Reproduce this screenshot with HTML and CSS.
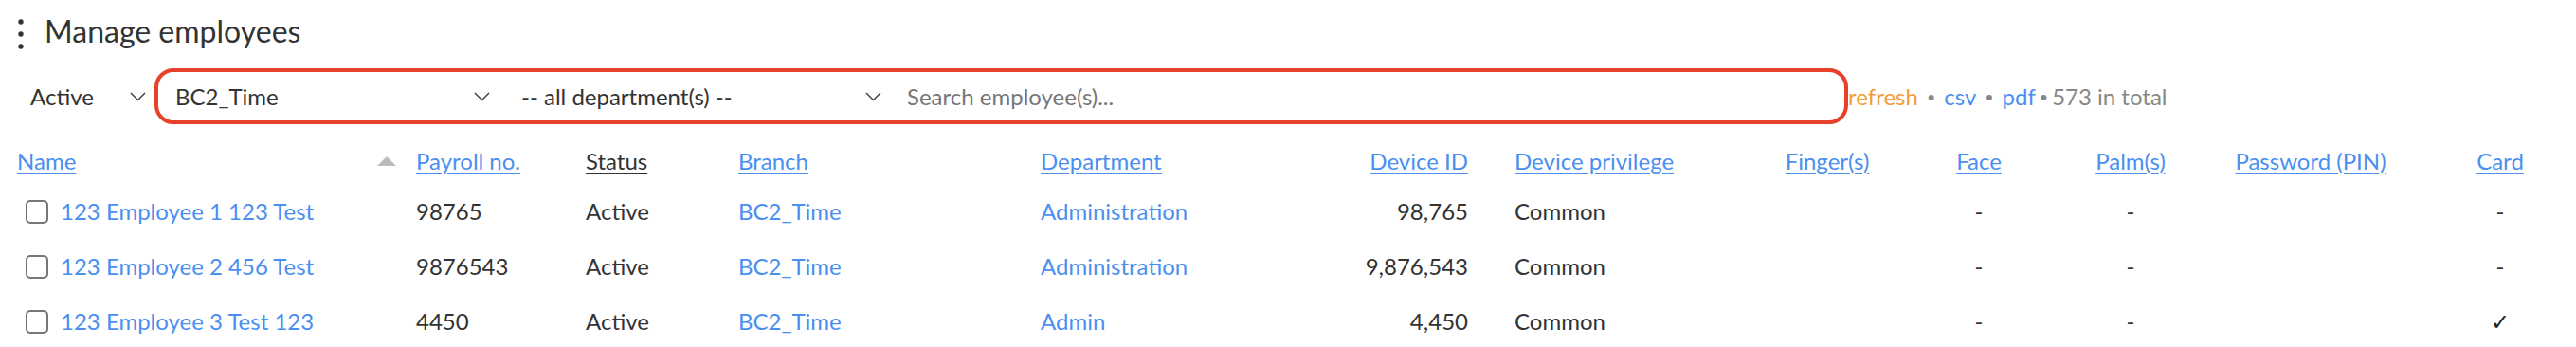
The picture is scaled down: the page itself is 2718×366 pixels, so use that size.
FILE: index.html
```html
<!DOCTYPE html>
<html lang="en">
<head>
    <meta charset="UTF-8">
    <meta name="viewport" content="width=device-width, initial-scale=1.0">
    <title>Manage employees</title>
    <link rel="stylesheet" href="styles.css">
</head>
<body>

    <div class="title-bar">
        <svg class="kebab" width="10" height="34" viewBox="0 0 10 34">
            <circle cx="5" cy="4" r="2.7"/>
            <circle cx="5" cy="17" r="2.7"/>
            <circle cx="5" cy="30" r="2.7"/>
        </svg>
        <h1>Manage employees</h1>
    </div>

    <div class="filter-bar">
        <div class="select status-select">
            <span>Active</span>
            <svg class="chevron" width="17" height="10" viewBox="0 0 17 10"><polyline points="1,1 8.5,8.5 16,1"/></svg>
        </div>
        <div class="filter-box">
            <div class="select branch-select">
                <span>BC2_Time</span>
                <svg class="chevron" width="17" height="10" viewBox="0 0 17 10"><polyline points="1,1 8.5,8.5 16,1"/></svg>
            </div>
            <div class="select dept-select">
                <span>-- all department(s) --</span>
                <svg class="chevron" width="17" height="10" viewBox="0 0 17 10"><polyline points="1,1 8.5,8.5 16,1"/></svg>
            </div>
            <input type="text" class="search-input" placeholder="Search employee(s)...">
        </div>
        <div class="summary">
            <a href="#" class="refresh">refresh</a>
            <span class="bullet">&bull;</span>
            <a href="#">csv</a>
            <span class="bullet">&bull;</span>
            <a href="#">pdf</a>
            <span class="bullet last">&bull;</span>
            <span class="total">573 in total</span>
        </div>
    </div>

    <table class="employees">
        <colgroup>
            <col style="width: 422px">
            <col style="width: 179px">
            <col style="width: 161px">
            <col style="width: 319px">
            <col style="width: 282px">
            <col style="width: 218px">
            <col style="width: 250px">
            <col style="width: 160px">
            <col style="width: 160px">
            <col style="width: 160px">
            <col style="width: 220px">
            <col style="width: 170px">
        </colgroup>
        <thead>
            <tr>
                <th>
                    <div class="name-head">
                        <a href="#">Name</a>
                        <svg class="sort" width="20" height="10" viewBox="0 0 20 10"><polygon points="10,0 20,10 0,10"/></svg>
                    </div>
                </th>
                <th><a href="#">Payroll no.</a></th>
                <th><span class="plain-head">Status</span></th>
                <th><a href="#">Branch</a></th>
                <th><a href="#">Department</a></th>
                <th class="num"><a href="#">Device ID</a></th>
                <th><a href="#">Device privilege</a></th>
                <th class="mid"><a href="#">Finger(s)</a></th>
                <th class="mid"><a href="#">Face</a></th>
                <th class="mid"><a href="#">Palm(s)</a></th>
                <th class="mid"><a href="#">Password (PIN)</a></th>
                <th class="mid card"><a href="#">Card</a></th>
            </tr>
        </thead>
        <tbody id="employeeRows"></tbody>
    </table>

    <script>
        const employees = [
            { name: "123 Employee 1 123 Test", payroll: "98765", status: "Active", branch: "BC2_Time", department: "Administration", deviceId: 98765, privilege: "Common", card: false },
            { name: "123 Employee 2 456 Test", payroll: "9876543", status: "Active", branch: "BC2_Time", department: "Administration", deviceId: 9876543, privilege: "Common", card: false },
            { name: "123 Employee 3 Test 123", payroll: "4450", status: "Active", branch: "BC2_Time", department: "Admin", deviceId: 4450, privilege: "Common", card: true }
        ];

        const rows = document.getElementById('employeeRows');

        employees.forEach(emp => {
            const tr = document.createElement('tr');
            tr.innerHTML =
                '<td><div class="name-cell"><input type="checkbox" class="pick"><a href="#">' + emp.name + '</a></div></td>' +
                '<td>' + emp.payroll + '</td>' +
                '<td>' + emp.status + '</td>' +
                '<td><a href="#">' + emp.branch + '</a></td>' +
                '<td><a href="#">' + emp.department + '</a></td>' +
                '<td class="num">' + emp.deviceId.toLocaleString('en-US') + '</td>' +
                '<td>' + emp.privilege + '</td>' +
                '<td class="mid"></td>' +
                '<td class="mid">-</td>' +
                '<td class="mid">-</td>' +
                '<td class="mid"></td>' +
                '<td class="mid card">' + (emp.card ? '<span class="tick">&#10003;</span>' : '-') + '</td>';
            rows.appendChild(tr);
        });
    </script>
</body>
</html>
```

FILE: styles.css
```css
* {
    margin: 0;
    padding: 0;
    box-sizing: border-box;
}

body {
    font-family: Lato, "Open Sans", sans-serif;
    font-size: 24px;
    color: #333;
    background-color: #fff;
    padding-left: 17px;
}

a {
    color: #4a8ff0;
    text-decoration: none;
}

.title-bar {
    display: flex;
    align-items: flex-start;
    gap: 20px;
    padding-top: 14px;
}

.kebab {
    margin-top: 5px;
    fill: #333;
}

h1 {
    font-size: 32px;
    font-weight: 400;
    line-height: 38px;
    color: #333;
}

.filter-bar {
    display: flex;
    align-items: center;
    margin-top: 19px;
    height: 59px;
}

.select {
    display: flex;
    align-items: center;
    justify-content: space-between;
    height: 100%;
    color: #333;
}

.chevron {
    fill: none;
    stroke: #444;
    stroke-width: 1.5;
}

.status-select {
    width: 146px;
    padding: 0 9px 0 15px;
}

.filter-box {
    display: flex;
    align-items: center;
    width: 1787px;
    height: 59px;
    border: 4px solid #e8402a;
    border-radius: 20px;
}

.branch-select {
    width: 365px;
    padding: 0 15px 0 18px;
}

.dept-select {
    width: 408px;
    padding: 0 10px 0 18px;
}

.search-input {
    flex: 1;
    height: 100%;
    border: none;
    outline: none;
    background: transparent;
    font-family: inherit;
    font-size: 24px;
    color: #333;
    padding-left: 17px;
}

.search-input::placeholder {
    color: #777;
}

.summary {
    display: flex;
    align-items: center;
    color: #888;
    white-space: nowrap;
}

.summary .refresh {
    color: #f29d38;
}

.bullet {
    font-size: 16px;
    color: #888;
    margin: 0 9px;
}

.bullet.last {
    margin: 0 4px;
}

.employees {
    margin-top: 14px;
    table-layout: fixed;
    border-collapse: collapse;
    width: 2701px;
}

.employees th,
.employees td {
    text-align: left;
    font-weight: 400;
    white-space: nowrap;
    vertical-align: middle;
    line-height: 26px;
}

.employees thead tr {
    height: 49px;
}

.employees tbody tr {
    height: 58px;
}

.employees th a {
    text-decoration: underline;
    text-decoration-thickness: 2px;
    text-underline-offset: 3px;
}

.plain-head {
    text-decoration: underline;
    text-decoration-thickness: 2px;
    text-underline-offset: 3px;
    color: #333;
}

.name-head {
    display: flex;
    align-items: center;
    justify-content: space-between;
    padding: 0 21px 0 1px;
}

.sort {
    fill: #bbb;
}

.name-cell {
    display: flex;
    align-items: center;
    gap: 13px;
    padding-left: 10px;
}

.pick {
    appearance: none;
    width: 24px;
    height: 25px;
    border: 2px solid #777;
    border-radius: 5px;
    background: #fff;
}

.employees .num {
    text-align: right;
    padding-right: 49px;
}

.employees .mid {
    text-align: center;
}

.employees .card {
    padding-left: 10px;
}

.tick {
    font-family: "DejaVu Sans", sans-serif;
    font-weight: bold;
    color: #222;
}
```
